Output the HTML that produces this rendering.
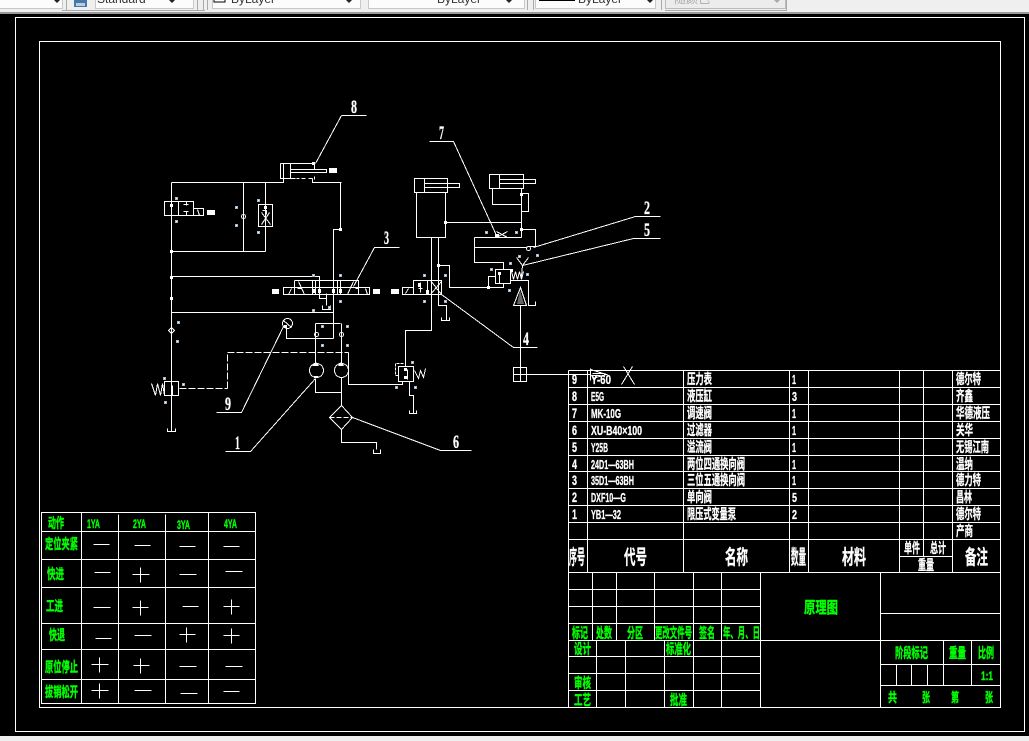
<!DOCTYPE html>
<html><head><meta charset="utf-8">
<style>
html,body{margin:0;padding:0;background:#000;width:1029px;height:741px;overflow:hidden}
svg{display:block}
text{font-family:"Liberation Sans","Noto Sans CJK SC",sans-serif;font-weight:700}
.g{fill:#0f0;stroke:#0f0;stroke-width:.4;font-size:14px}
.w{fill:#fff;stroke:#fff;stroke-width:.3;font-size:14px}
.h{fill:#fff;stroke:#fff;stroke-width:.3;font-size:20px}
.n{font-family:"Liberation Serif",serif;fill:#fff;stroke:#fff;stroke-width:.3;font-size:19px;font-weight:700}
.t{font-size:12px;fill:#333;font-weight:400}
</style></head><body>
<svg width="1029" height="741" viewBox="0 0 1029 741" xmlns="http://www.w3.org/2000/svg">
<defs><g id="d"><rect width="3" height="3" fill="#9bd"/><rect width="1" height="1" x="1" y="1" fill="#fff"/><rect width="1" height="1" x="2" y="2" fill="#e94"/></g></defs>
<rect width="1029" height="741" fill="#000"/>
<!-- toolbar -->
<rect width="1029" height="12" fill="#efefef"/>
<rect y="12" width="1029" height="2" fill="#999"/>
<g fill="#fcfcfc" stroke="#c8c8c8">
<rect x="-2" y="-2" width="64.500" height="10.500"/>
<rect x="95.500" y="-2" width="98" height="10.500"/>
<rect x="212.500" y="-2" width="148" height="10.500"/>
<rect x="368.500" y="-2" width="156" height="10.500"/>
<rect x="535.500" y="-2" width="120" height="10.500"/>
</g>
<rect x="665.500" y="-2" width="120" height="10.500" fill="#ececec" stroke="#bbb"/>
<g stroke="#aaa" fill="none"><path d="M66.500 0V10M197.500 0V11M203.500 0V10M207.500 0V10M527.500 0V10M533.500 0V10M661.500 0V10M786.500 0V10.500H665M205 10.500H62"/></g>
<rect x="74" y="0" width="13" height="7" fill="#47a"/><rect x="76" y="3" width="9" height="3" fill="#bcd"/>
<rect x="214" y="-2" width="11" height="4" fill="#fff" stroke="#000"/>
<rect x="539" y="0" width="36" height="1" fill="#000"/>
<text class="t" x="97" y="3">Standard</text>
<text class="t" x="231" y="3">ByLayer</text>
<text class="t" x="437" y="3">ByLayer</text>
<text class="t" x="578" y="3">ByLayer</text>
<text class="t" x="674" y="3" style="fill:#aaa">随颜色</text>
<g fill="#222"><path d="M54 0h6l-3 3zM169 0h6l-3 3zM346 0h6l-3 3zM506 0h6l-3 3zM647 0h6l-3 3z"/></g>
<path d="M774 0h6l-3 3z" fill="#aaa"/>
<g fill="none" stroke="#fff" stroke-width="1" shape-rendering="crispEdges" transform="translate(.5,.5)">
<!-- frames -->
<rect x="15" y="17" width="1009" height="714"/>
<rect x="39" y="41" width="961" height="666"/>
<!-- left table -->
<path d="M41 512H255V703H41ZM41 531H255M41 559H255M41 587H255M41 623H255M41 649H255M41 679H255M81 512V703M118 514V703M165 514V703M208 512V703"/>
<path d="M93 544H109M134 545H150M179 546H195M223 546H239M94 572H110M132 574H149M140 567V582M179 574H196M225 571H242M93 607H110M132 607H148M140 600V615M182 606H198M223 606H239M231 599V614M95 638H111M134 635H151M179 634H195M186 627V642M223 635H239M231 628V643M91 664H108M99 657V672M133 665H149M140 658V673M179 666H196M225 666H242M91 690H108M99 683V698M134 690H151M180 693H197M223 691H239"/>
<!-- parts list -->
<path d="M568 370H1000M568 387H1000M568 404H1000M568 421H1000M568 438H1000M568 455H1000M568 471H1000M568 488H1000M568 505H1000M568 522H1000M568 539H1000M568 572H1000M568 370V707M587 370V572M683 370V572M789 370V572M808 370V572M899 370V572M923 370V556M952 370V572M1000 370V707M899 556H952"/>
<path d="M527 374H590M623 366L634 384M632 366L621 384"/>
<path d="M590 368V380M590 369L606 374L592 378M592 373H604M592 375H600"/>
<!-- title block -->
<path d="M568 589H760M568 606H760M568 623H760M568 640H1000M568 656H760M568 673H760M568 690H760M568 707H1000"/>
<path d="M592 572V640M616 572V640M654 572V640M693 572V707M721 572V707M760 572V707M596 640V707M625 640V707M664 640V707M880 572V707M880 613H1000M880 664H1000M880 685H1000M943 640V685M971 640V685M896 664V685M911 664V685M927 664V685"/>
<!-- circuit lines -->
<path d="M341 115H366M341 115L315 163"/>
<path d="M280 163H314V169M280 163V178H293M283 163V178M290 163V178M290 169H326V172H290M297 172H300M304 172H308M312 172H326M293 178H295M296 178M296 178H299M301 178H305M308 178H312M314 176V179M283 178V182H171M312 178V182H341M340 182V229H333V338M333 229H341"/>
<path d="M171 182V428M164 201H193V215H164ZM178 201V215M193 208H203V215H193M197 209L199 215M186 201V205M183 204H188M186 211V215M183 211H188M243 182V251M265 182V204M265 226V251M258 204H272V226H258ZM171 251H265M171 276H319V298H326V305M326 293V305M322 305V309H330V305"/>
<path d="M258 204M261 212L270 224M269 212L261 224M262 210H266V214M265 204V226"/>
<path d="M283 287H369V294H283ZM294 280H358V294M294 280V294M315 280V294M337 280V294M312 280V294M319 280V294M333 280V294M340 280V294M298 281L304 294M347 294L353 281M288 294L291 288M365 288L367 294M297 288H301M355 288H358"/>
<path d="M353 286L374 247H399"/>
<path d="M171 312H333M167 428V431H175V428M171 431V428M164 381H178V395H164ZM172 385V395M151 383L155 395L157 383L160 395L162 383L164 395"/>
<path d="M179 388H227"  stroke-dasharray="7 2"/>
<path d="M227 388V352" stroke-dasharray="7 2"/>
<path d="M227 352H348" stroke-dasharray="7 2"/>
<path d="M283 326L241 412H216"/>
<path d="M286 328V338H333M315 323H340M315 323V363M341 323V363M315 378V392H341M341 377V405L352 417L341 429L329 417L341 405M341 429V442H376V449M373 449V453H380V449"/>
<path d="M329 417H352" stroke-dasharray="5 2"/>
<path d="M352 417L440 450H471M315 378L250 451H225"/>
<path d="M348 352V384H402V381M405 366V330H431V290M409 381V395H413V413M409 410V413H416V410M398 366H413V381H398ZM407 369V379M414 370L418 378L420 370L423 377L425 368"/>
<path d="M403 363H395V375H398" stroke-dasharray="3 1"/>
<!-- right cylinders -->
<path d="M414 178H447V192H414ZM424 178V192M424 183H459V187H424M416 192V237H445V192M431 237V330M438 237V305H446V320M441 317V320H449V317M438 265H449V287H488V276H495M503 283V287H488"/>
<path d="M489 174H523V188H489ZM499 174V188M499 179H535V183H499M492 188V204H521M521 188V237M521 193H528V211H521M445 222H521M474 237H521M474 237V262H503V269M474 247H527M521 229H535V246H528"/>
<path d="M429 141H453L496 235"/>
<path d="M496 237L507 231M496 231L507 237M495 237H500"/>
<path d="M533 247L635 216H660M522 265L633 238H660M516 257L522 265L528 257M522 265L521 276"/>
<path d="M495 269H510V283H495ZM499 273V283M511 271L513 279L515 271L517 279L519 271L521 279L523 271M510 280H528V305M528 301V305H535V301"/>
<path d="M413 280H441V294H413ZM427 280V294M402 287H413V294H402ZM405 293L408 288M420 282V292M430 280L441 294M441 281L430 294M418 288H422"/>
<path d="M441 294L513 347H537"/>
<path d="M520 287L513 305H526ZM520 305V367M513 367H526V381H513ZM513 374H568M520 367V381"/>
<circle cx="287" cy="323" r="5"/>
<path d="M283 320L291 327"/>
<circle cx="316" cy="370" r="7"/><circle cx="341" cy="370" r="7"/>
<circle cx="243" cy="216" r="2"/><circle cx="316" cy="334" r="2"/><circle cx="341" cy="334" r="2"/>
<circle cx="528" cy="248" r="2"/>
<path d="M168 330L171 327L174 330L171 333Z"/>
</g>
<!-- filled blocks and nodes -->
<g fill="#fff">
<rect x="329" y="168" width="8" height="5"/><rect x="207" y="210" width="8" height="5"/>
<rect x="272" y="289" width="7" height="5"/><rect x="373" y="289" width="7" height="5"/>
<rect x="391" y="289" width="8" height="5"/>
<rect x="170" y="204" width="3" height="3"/><rect x="170" y="250" width="3" height="3"/><rect x="170" y="276" width="3" height="3"/><rect x="170" y="297" width="3" height="3"/>
<rect x="312" y="162" width="3" height="3"/><rect x="264" y="206" width="3" height="3"/><rect x="339" y="228" width="3" height="3"/>
<rect x="318" y="289" width="3" height="4"/><rect x="332" y="289" width="3" height="4"/><rect x="312" y="289" width="3" height="4"/><rect x="339" y="289" width="3" height="4"/>
<rect x="314" y="363" width="4" height="3"/><rect x="339" y="363" width="4" height="3"/><rect x="314" y="376" width="4" height="2"/>
<rect x="284" y="325" width="3" height="3"/><rect x="444" y="221" width="3" height="3"/><rect x="520" y="193" width="3" height="3"/><rect x="520" y="228" width="3" height="3"/>
<rect x="426" y="290" width="3" height="4"/><rect x="418" y="283" width="3" height="4"/><rect x="437" y="264" width="3" height="3"/>
<rect x="498" y="272" width="3" height="3"/><rect x="487" y="286" width="3" height="3"/><rect x="510" y="269" width="3" height="3"/>
<rect x="404" y="368" width="3" height="3"/><rect x="404" y="376" width="3" height="3"/>
<rect x="495" y="234" width="4" height="3"/>
<path d="M312 366H319L316 362ZM338 366H344L341 362Z"/>
</g>
<path d="M520 290L517 304H524Z" fill="#666"/>
<!-- small coloured grip marks -->
<use href="#d" x="175" y="197"/><use href="#d" x="175" y="220"/><use href="#d" x="235" y="206"/><use href="#d" x="235" y="224"/><use href="#d" x="257" y="199"/><use href="#d" x="257" y="231"/><use href="#d" x="312" y="274"/><use href="#d" x="339" y="274"/><use href="#d" x="339" y="300"/><use href="#d" x="328" y="306"/><use href="#d" x="312" y="309"/><use href="#d" x="177" y="321"/><use href="#d" x="176" y="340"/><use href="#d" x="163" y="377"/><use href="#d" x="182" y="383"/><use href="#d" x="164" y="401"/><use href="#d" x="321" y="325"/><use href="#d" x="346" y="325"/><use href="#d" x="321" y="344"/><use href="#d" x="346" y="344"/><use href="#d" x="411" y="361"/><use href="#d" x="395" y="386"/><use href="#d" x="414" y="386"/><use href="#d" x="423" y="300"/><use href="#d" x="485" y="231"/><use href="#d" x="515" y="231"/><use href="#d" x="518" y="255"/><use href="#d" x="536" y="254"/><use href="#d" x="509" y="262"/><use href="#d" x="490" y="268"/><use href="#d" x="526" y="273"/><use href="#d" x="508" y="289"/><use href="#d" x="423" y="274"/><use href="#d" x="444" y="274"/><use href="#d" x="423" y="300"/><use href="#d" x="444" y="300"/>
<!-- leader numbers -->
<text class="n" x="351" y="113" textLength="6" lengthAdjust="spacingAndGlyphs">8</text>
<text class="n" x="384" y="244" textLength="5" lengthAdjust="spacingAndGlyphs">3</text>
<text class="n" x="439" y="139" textLength="5" lengthAdjust="spacingAndGlyphs">7</text>
<text class="n" x="644" y="214" textLength="6" lengthAdjust="spacingAndGlyphs">2</text>
<text class="n" x="644" y="236" textLength="6" lengthAdjust="spacingAndGlyphs">5</text>
<text class="n" x="523" y="345" textLength="6" lengthAdjust="spacingAndGlyphs">4</text>
<text class="n" x="225" y="410" textLength="6" lengthAdjust="spacingAndGlyphs">9</text>
<text class="n" x="235" y="449" textLength="5" lengthAdjust="spacingAndGlyphs">1</text>
<text class="n" x="453" y="448" textLength="6" lengthAdjust="spacingAndGlyphs">6</text>
<!-- left table text -->
<g class="g">
<text class="g" x="48" y="528" textLength="16" lengthAdjust="spacingAndGlyphs">动作</text>
<text class="g" x="87" y="528" textLength="13" lengthAdjust="spacingAndGlyphs" style="font-size:12px">1YA</text>
<text class="g" x="133" y="528" textLength="13" lengthAdjust="spacingAndGlyphs" style="font-size:12px">2YA</text>
<text class="g" x="177" y="529" textLength="13" lengthAdjust="spacingAndGlyphs" style="font-size:12px">3YA</text>
<text class="g" x="224" y="528" textLength="13" lengthAdjust="spacingAndGlyphs" style="font-size:12px">4YA</text>
<text class="g" x="45" y="549" textLength="33" lengthAdjust="spacingAndGlyphs">定位夹紧</text>
<text class="g" x="47" y="579" textLength="17" lengthAdjust="spacingAndGlyphs">快进</text>
<text class="g" x="46" y="611" textLength="17" lengthAdjust="spacingAndGlyphs">工进</text>
<text class="g" x="49" y="640" textLength="16" lengthAdjust="spacingAndGlyphs">快退</text>
<text class="g" x="45" y="672" textLength="33" lengthAdjust="spacingAndGlyphs">原位停止</text>
<text class="g" x="45" y="697" textLength="33" lengthAdjust="spacingAndGlyphs">拔销松开</text>
<!-- title block text -->
<text class="g" x="572" y="638" textLength="16" lengthAdjust="spacingAndGlyphs">标记</text>
<text class="g" x="596" y="638" textLength="16" lengthAdjust="spacingAndGlyphs">处数</text>
<text class="g" x="627" y="638" textLength="16" lengthAdjust="spacingAndGlyphs">分区</text>
<text class="g" x="655" y="638" textLength="37" lengthAdjust="spacingAndGlyphs">更改文件号</text>
<text class="g" x="699" y="638" textLength="16" lengthAdjust="spacingAndGlyphs">签名</text>
<text class="g" x="723" y="638" textLength="37" lengthAdjust="spacingAndGlyphs">年、月、日</text>
<text class="g" x="574" y="654" textLength="17" lengthAdjust="spacingAndGlyphs">设计</text>
<text class="g" x="666" y="654" textLength="25" lengthAdjust="spacingAndGlyphs">标准化</text>
<text class="g" x="574" y="688" textLength="17" lengthAdjust="spacingAndGlyphs">审核</text>
<text class="g" x="574" y="705" textLength="17" lengthAdjust="spacingAndGlyphs">工艺</text>
<text class="g" x="670" y="705" textLength="17" lengthAdjust="spacingAndGlyphs">批准</text>
<text class="g" x="804" y="613" textLength="34" lengthAdjust="spacingAndGlyphs" style="font-size:16px">原理图</text>
<text class="g" x="895" y="658" textLength="33" lengthAdjust="spacingAndGlyphs">阶段标记</text>
<text class="g" x="949" y="658" textLength="17" lengthAdjust="spacingAndGlyphs">重量</text>
<text class="g" x="978" y="658" textLength="16" lengthAdjust="spacingAndGlyphs">比例</text>
<text class="g" x="981" y="680" textLength="12" lengthAdjust="spacingAndGlyphs" style="font-size:12px">1:1</text>
<text class="g" x="888" y="702" textLength="9" lengthAdjust="spacingAndGlyphs" style="font-size:13px">共</text>
<text class="g" x="922" y="702" textLength="8" lengthAdjust="spacingAndGlyphs" style="font-size:13px">张</text>
<text class="g" x="951" y="702" textLength="8" lengthAdjust="spacingAndGlyphs" style="font-size:13px">第</text>
<text class="g" x="985" y="702" textLength="8" lengthAdjust="spacingAndGlyphs" style="font-size:13px">张</text>
</g>
<!-- parts list text -->
<g>
<text class="w" x="572" y="384" textLength="5" lengthAdjust="spacingAndGlyphs">9</text>
<text class="w" x="572" y="401" textLength="5" lengthAdjust="spacingAndGlyphs">8</text>
<text class="w" x="572" y="418" textLength="5" lengthAdjust="spacingAndGlyphs">7</text>
<text class="w" x="572" y="435" textLength="5" lengthAdjust="spacingAndGlyphs">6</text>
<text class="w" x="572" y="452" textLength="5" lengthAdjust="spacingAndGlyphs">5</text>
<text class="w" x="572" y="469" textLength="5" lengthAdjust="spacingAndGlyphs">4</text>
<text class="w" x="572" y="485" textLength="5" lengthAdjust="spacingAndGlyphs">3</text>
<text class="w" x="572" y="502" textLength="5" lengthAdjust="spacingAndGlyphs">2</text>
<text class="w" x="572" y="519" textLength="5" lengthAdjust="spacingAndGlyphs">1</text>
<text class="w" x="591" y="384" textLength="20" lengthAdjust="spacingAndGlyphs" style="font-size:13px">Y-60</text>
<text class="w" x="591" y="401" textLength="13" lengthAdjust="spacingAndGlyphs" style="font-size:13px">E5G</text>
<text class="w" x="591" y="418" textLength="30" lengthAdjust="spacingAndGlyphs" style="font-size:13px">MK-10G</text>
<text class="w" x="591" y="435" textLength="51" lengthAdjust="spacingAndGlyphs" style="font-size:13px">XU-B40×100</text>
<text class="w" x="591" y="452" textLength="17" lengthAdjust="spacingAndGlyphs" style="font-size:13px">Y25B</text>
<text class="w" x="591" y="469" textLength="43" lengthAdjust="spacingAndGlyphs" style="font-size:13px">24D1—63BH</text>
<text class="w" x="591" y="485" textLength="43" lengthAdjust="spacingAndGlyphs" style="font-size:13px">35D1—63BH</text>
<text class="w" x="591" y="502" textLength="35" lengthAdjust="spacingAndGlyphs" style="font-size:13px">DXF10—G</text>
<text class="w" x="591" y="519" textLength="30" lengthAdjust="spacingAndGlyphs" style="font-size:13px">YB1—32</text>
<text class="w" x="687" y="384" textLength="25" lengthAdjust="spacingAndGlyphs">压力表</text>
<text class="w" x="687" y="401" textLength="25" lengthAdjust="spacingAndGlyphs">液压缸</text>
<text class="w" x="687" y="418" textLength="25" lengthAdjust="spacingAndGlyphs">调速阀</text>
<text class="w" x="687" y="435" textLength="25" lengthAdjust="spacingAndGlyphs">过滤器</text>
<text class="w" x="687" y="452" textLength="25" lengthAdjust="spacingAndGlyphs">溢流阀</text>
<text class="w" x="687" y="469" textLength="58" lengthAdjust="spacingAndGlyphs">两位四通换向阀</text>
<text class="w" x="687" y="485" textLength="58" lengthAdjust="spacingAndGlyphs">三位五通换向阀</text>
<text class="w" x="687" y="502" textLength="25" lengthAdjust="spacingAndGlyphs">单向阀</text>
<text class="w" x="687" y="519" textLength="49" lengthAdjust="spacingAndGlyphs">限压式变量泵</text>
<text class="w" x="792" y="384" textLength="4" lengthAdjust="spacingAndGlyphs" style="font-size:13px">1</text>
<text class="w" x="792" y="401" textLength="5" lengthAdjust="spacingAndGlyphs" style="font-size:13px">3</text>
<text class="w" x="792" y="418" textLength="4" lengthAdjust="spacingAndGlyphs" style="font-size:13px">1</text>
<text class="w" x="792" y="435" textLength="4" lengthAdjust="spacingAndGlyphs" style="font-size:13px">1</text>
<text class="w" x="792" y="452" textLength="4" lengthAdjust="spacingAndGlyphs" style="font-size:13px">1</text>
<text class="w" x="792" y="469" textLength="4" lengthAdjust="spacingAndGlyphs" style="font-size:13px">1</text>
<text class="w" x="792" y="485" textLength="4" lengthAdjust="spacingAndGlyphs" style="font-size:13px">1</text>
<text class="w" x="792" y="502" textLength="5" lengthAdjust="spacingAndGlyphs" style="font-size:13px">5</text>
<text class="w" x="792" y="519" textLength="5" lengthAdjust="spacingAndGlyphs" style="font-size:13px">2</text>
<text class="w" x="956" y="384" textLength="25" lengthAdjust="spacingAndGlyphs">德尔特</text>
<text class="w" x="956" y="401" textLength="17" lengthAdjust="spacingAndGlyphs">齐鑫</text>
<text class="w" x="956" y="418" textLength="34" lengthAdjust="spacingAndGlyphs">华德液压</text>
<text class="w" x="956" y="435" textLength="17" lengthAdjust="spacingAndGlyphs">关华</text>
<text class="w" x="956" y="452" textLength="33" lengthAdjust="spacingAndGlyphs">无锡江南</text>
<text class="w" x="956" y="469" textLength="17" lengthAdjust="spacingAndGlyphs">温纳</text>
<text class="w" x="956" y="485" textLength="25" lengthAdjust="spacingAndGlyphs">德力特</text>
<text class="w" x="956" y="502" textLength="16" lengthAdjust="spacingAndGlyphs">昌林</text>
<text class="w" x="956" y="519" textLength="25" lengthAdjust="spacingAndGlyphs">德尔特</text>
<text class="w" x="956" y="536" textLength="17" lengthAdjust="spacingAndGlyphs">产商</text>
<text class="h" x="569" y="564" textLength="16" lengthAdjust="spacingAndGlyphs">序号</text>
<text class="h" x="624" y="564" textLength="23" lengthAdjust="spacingAndGlyphs">代号</text>
<text class="h" x="725" y="564" textLength="23" lengthAdjust="spacingAndGlyphs">名称</text>
<text class="h" x="791" y="564" textLength="15" lengthAdjust="spacingAndGlyphs">数量</text>
<text class="h" x="842" y="564" textLength="24" lengthAdjust="spacingAndGlyphs">材料</text>
<text class="h" x="965" y="564" textLength="23" lengthAdjust="spacingAndGlyphs">备注</text>
<text class="w" x="904" y="553" textLength="16" lengthAdjust="spacingAndGlyphs">单件</text>
<text class="w" x="930" y="553" textLength="16" lengthAdjust="spacingAndGlyphs">总计</text>
<text class="w" x="918" y="570" textLength="16" lengthAdjust="spacingAndGlyphs">重量</text>
</g>
<rect y="736" width="1029" height="5" fill="#efefef"/>
</svg>
</body></html>
